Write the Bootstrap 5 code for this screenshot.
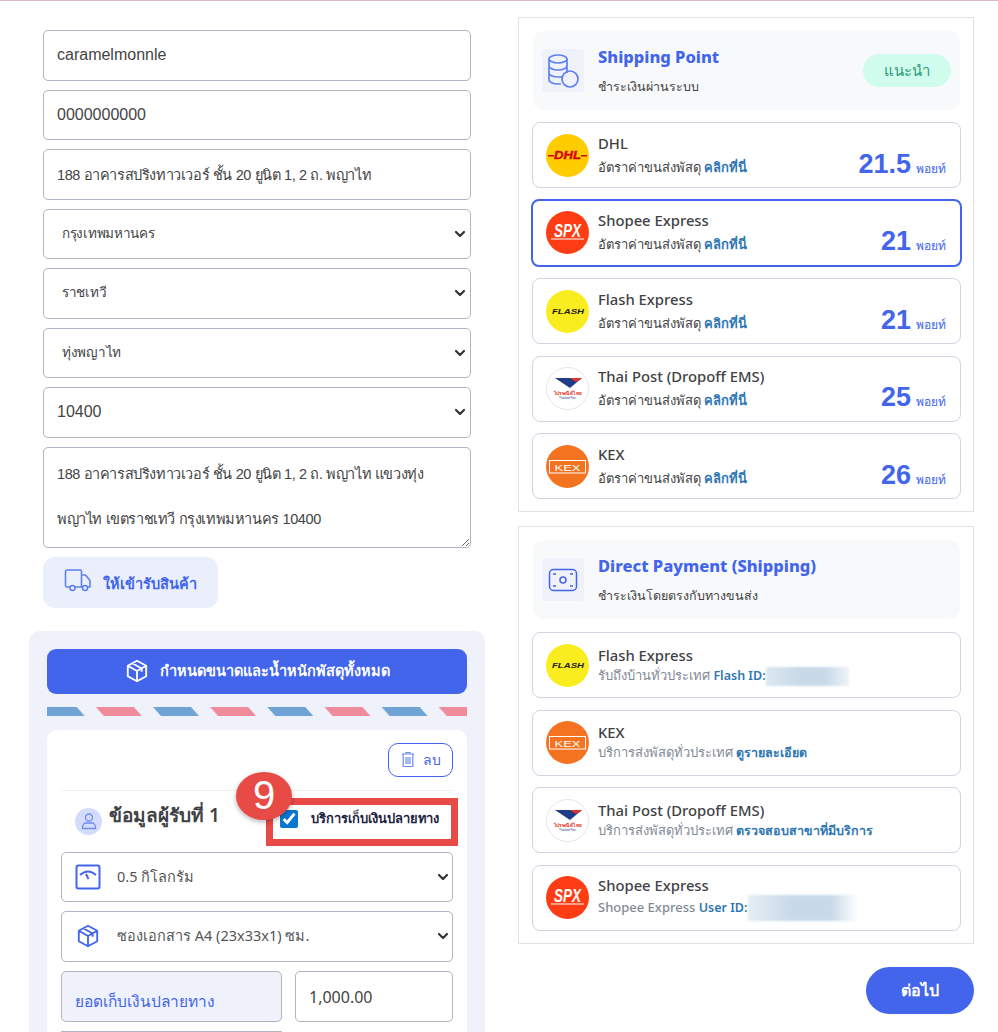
<!DOCTYPE html>
<html lang="th">
<head>
    <meta charset="UTF-8">
    <title>Shipping</title>
    <link href="https://cdn.jsdelivr.net/npm/bootstrap@5.3.0/dist/css/bootstrap.min.css" rel="stylesheet">
    <style>
        html, body { height: 1032px; overflow: hidden; }
        body { border-top: 1px solid #d9b8c2; font-family: "Noto Sans", "Noto Sans CJK SC", sans-serif; color: #3f4246; }
        .form-select { background-image: url("data:image/svg+xml,%3csvg xmlns='http://www.w3.org/2000/svg' viewBox='0 0 12 12'%3e%3cpath fill='none' stroke='%23333' stroke-width='2.2' stroke-linecap='round' stroke-linejoin='round' d='M2 4l4 4 4-4'/%3e%3c/svg%3e"); background-size: 12px 12px; }
        .page-left { width: 456px; margin-left: 29px; padding-top: 29px; }
        .page-right { width: 456px; margin-left: 33px; padding-top: 16px; }
        .addr-form { padding: 0 14px; display: flex; flex-direction: column; gap: 9px; }
        .addr-form .form-control, .addr-form .form-select {
            height: 50.5px; padding-left: 13px; border-color: #aeb6c2; border-radius: 5px; color: #444;
            font-family: "Liberation Sans", "Noto Sans", sans-serif; font-size: 16px;
        }
        .addr-form .form-select { background-position: right 4px center; }
        .addr-form .thai-line { font-size: 14.5px; letter-spacing: -.4px; }
        .addr-form .thai-option { padding-left: 18px; font-size: 13.5px; letter-spacing: -.3px; }
        .addr-form textarea.form-control { height: 101px; line-height: 45px; padding: 4px 13px; resize: both; white-space: pre; overflow: hidden; }
        .pickup-btn { width: 175px; height: 51px; padding-top: 9px; background: #ebeffb; color: #4265ec; border: 0; border-radius: 12px; font-weight: 800; font-size: 14.5px; gap: 11px; }
        .pickup-btn svg { margin-top: -7px; }
        .parcel-panel { margin-top: 23px; padding: 18px; height: 401px; overflow: hidden; background: #eff2fb; border-radius: 10px 10px 0 0; }
        .size-btn { width: 100%; height: 45px; background: #4265ec; color: #fff; border: 0; border-radius: 9px; font-size: 14.5px; font-weight: 600; gap: 10px; }
        .size-btn:hover { background: #4265ec; color: #fff; }
        .air-stripe { display: block; width: 100%; height: 9px; margin: 13px 0 14px; }
        .receiver-card { background: #fff; border-radius: 10px 10px 0 0; padding: 13px 14px 0; height: 302px; }
        .del-btn { width: 65px; height: 34px; padding: 0; border: 1px solid #4265ec; border-radius: 10px; color: #4265ec; background: #fff; font-size: 14px; }
        .receiver-head { height: 62px; margin-top: 13px; border-top: 1px solid #eef0f3; position: relative; }
        .person-badge { width: 27px; height: 27px; margin-left: 14px; background: #d3dcfb; border-radius: 50%; }
        .receiver-title { font-size: 19px; font-weight: 600; margin-left: 7px; line-height: 1; margin-bottom: 12px; }
        .cod-box { position: absolute; left: 205px; top: 7px; width: 192px; height: 48px; border: 7px solid #e84a46; display: flex; align-items: center; padding: 0 0 6px 7px; gap: 13px; font-size: 12.9px; font-weight: 800; color: #1d2340; background: #fff; }
        .cod-box input { width: 18px; height: 18px; margin: 0; accent-color: #0a78d1; }
        .step-badge { position: absolute; left: 175px; top: -19px; width: 56px; height: 48px; background: #e84a46; color: #fff; border-radius: 50%; font-size: 40px; line-height: 46px; text-align: center; font-family: "Liberation Sans", sans-serif; box-shadow: 0 2px 5px rgba(0,0,0,.3); z-index: 2; }
        .field-wrap { position: relative; margin-bottom: 9px; }
        .field-wrap .form-select { height: 50.5px; padding-left: 55px; border-color: #aeb6c2; border-radius: 5px; color: #555; font-size: 14.5px; background-position: right 3px center; }
        .field-icon { position: absolute; left: 14px; top: 12px; width: 26px; height: 26px; color: #4265ec; }
        .cod-label { width: 221px; height: 51px; padding: 17px 13px 0; background: #eff2fb; border: 1px solid #aeb6c2; border-radius: 5px; color: #4265ec; font-size: 15.5px; line-height: 24px; }
        .cod-amount { width: 158px; height: 51px; padding: 2px 13px 0; border-color: #aeb6c2; border-radius: 5px; color: #444; font-size: 16px; }
        .next-field { width: 221px; margin-top: 9px; border-top: 1px solid #aeb6c2; }
        .ship-box { border: 1px solid #dee2e6; padding: 13px 12px 12px 13px; display: flex; flex-direction: column; }
        .ship-box + .ship-box { margin-top: 14px; }
        .ship-head { height: 79px; margin: 0 1px 12px; padding: 0 9px; background: #f8f9fb; border-radius: 10px; display: flex; align-items: center; }
        .ship-box + .ship-box .ship-head { margin-bottom: 13px; }
        .head-icon { width: 42px; height: 43px; background: #eff2fb; border-radius: 4px; flex: none; display: flex; align-items: center; justify-content: center; }
        .head-text { flex-grow: 1; margin-left: 14px; }
        .head-title { color: #4265ec; font-size: 16.5px; font-weight: 800; line-height: 24px; margin-bottom: 8px; }
        .head-sub { font-size: 12.5px; line-height: 20px; color: #444; }
        .rec-pill { width: 88px; height: 33px; background: #cffcec; color: #2f9a78; border-radius: 17px; font-size: 15px; line-height: 33px; text-align: center; }
        .ship-item { height: 66px; margin-bottom: 11.5px; padding: 0 13px; border: 1px solid #cfd5e1; border-radius: 8px; display: flex; align-items: center; background: #fff; }
        .ship-item:last-child { margin-bottom: 0; }
        .ship-item.is-picked { height: 68px; margin: -1px -1px 11.5px; width: calc(100% + 2px); border: 2px solid #4265ec; }
        .ship-logo { width: 43px; height: 43px; flex: none; display: block; }
        .ship-text { margin-left: 9px; flex-grow: 1; min-width: 0; }
        .ship-name { font-size: 14.8px; font-weight: 500; line-height: 20px; color: #3f4246; }
        .ship-desc { margin-top: 3px; font-size: 13px; line-height: 22px; color: #444; font-weight: 500; white-space: nowrap; }
        .ship-desc.is-muted { margin-top: 0; color: #828a96; line-height: 20px; }
        .ship-desc a { color: #2f77b4; text-decoration: none; font-weight: 600; }
        .ship-desc.is-muted a { font-size: 12.5px; }
        .ship-price { color: #4265ec; align-self: flex-end; padding: 0 1px 3.5px 0; white-space: nowrap; line-height: 30px; }
        .ship-price b { font-family: "Liberation Sans", sans-serif; font-size: 27px; margin-right: 5px; }
        .ship-price span { font-size: 12px; }
        .blur-id { display: inline-block; vertical-align: middle; height: 19px; width: 83px; margin-left: -3px; background: linear-gradient(90deg, #dde8f1, #c8d9e8 40%, #c8d9e8 70%, #eef3f8); filter: blur(1px); }
        .blur-id.is-long { width: 110px; height: 26px; background: linear-gradient(90deg, #e6eef5, #c8d9e8 40%, #c8d9e8 75%, #fff); }
        .next-btn { width: 108px; height: 47px; margin-top: 23px; background: #4265ec; color: #fff; border: 0; border-radius: 24px; font-size: 16px; font-weight: 600; }
        .next-btn:hover { background: #4265ec; color: #fff; }
    </style>
</head>
<body>
<svg width="0" height="0" class="position-absolute">
    <symbol id="iconBox" viewBox="0 0 24 24">
        <path d="M12 2.500l8.500 4.700v9.600L12 21.500l-8.500-4.700V7.200zM3.500 7.200l8.500 4.800 8.500-4.800M12 12v9.500M7.700 4.900l8.600 4.800v3" fill="none" stroke="currentColor" stroke-width="1.700" stroke-linejoin="round"/>
    </symbol>
</svg>

<div class="d-flex">
    <!-- Address and parcel -->
    <div class="page-left">
        <form class="addr-form">
            <input type="text" class="form-control" value="caramelmonnle">
            <input type="text" class="form-control" value="0000000000">
            <input type="text" class="form-control thai-line" value="188 อาคารสปริงทาวเวอร์ ชั้น 20 ยูนิต 1, 2 ถ. พญาไท">
            <select class="form-select thai-option"><option>กรุงเทพมหานคร</option></select>
            <select class="form-select thai-option"><option>ราชเทวี</option></select>
            <select class="form-select thai-option"><option>ทุ่งพญาไท</option></select>
            <select class="form-select"><option>10400</option></select>
            <textarea class="form-control thai-line">188 อาคารสปริงทาวเวอร์ ชั้น 20 ยูนิต 1, 2 ถ. พญาไท แขวงทุ่ง
พญาไท เขตราชเทวี กรุงเทพมหานคร 10400</textarea>
            <button type="button" class="btn pickup-btn d-flex align-items-center justify-content-center">
                <svg width="28" height="24" viewBox="0 0 28 24" fill="none" stroke="#5f80ee" stroke-width="1.600" stroke-linejoin="round"><path d="M6 19H3a1.500 1.500 0 0 1-1.500-1.500v-14A1.500 1.500 0 0 1 3 2h13.500a1 1 0 0 1 1 1v16H11"/><path d="M17.500 7h4l4.500 5.500V19h-2.500M17.500 19H18"/><circle cx="8.500" cy="20" r="2.500"/><circle cx="21" cy="20" r="2.500"/></svg>
                ให้เข้ารับสินค้า
            </button>
        </form>

        <div class="parcel-panel">
            <button type="button" class="btn size-btn d-flex align-items-center justify-content-center">
                <svg width="26" height="26"><use href="#iconBox"/></svg>
                กำหนดขนาดและน้ำหนักพัสดุทั้งหมด
            </button>
            <svg class="air-stripe" height="9">
                <defs>
                    <pattern id="airPattern" width="114.300" height="9" patternUnits="userSpaceOnUse" x="-8.300">
                        <polygon points="0,0 38,0 46,9 8,9" fill="#6fa3d5"/>
                        <polygon points="57.150,0 95.150,0 103.150,9 65.150,9" fill="#f08b9c"/>
                    </pattern>
                </defs>
                <rect width="100%" height="9" fill="url(#airPattern)"/>
            </svg>

            <div class="receiver-card">
                <div class="d-flex justify-content-end">
                    <button type="button" class="btn del-btn d-flex align-items-center justify-content-center gap-2">
                        <svg width="14" height="17" viewBox="0 0 14 17" fill="none" stroke="#6f8cf0" stroke-width="1.200"><path d="M1 3h12M5 3V1.500h4V3M2.200 3v12.500h9.600V3M5 6v7M7 6v7M9 6v7"/></svg>
                        ลบ
                    </button>
                </div>
                <div class="receiver-head d-flex align-items-center">
                    <div class="person-badge d-flex align-items-center justify-content-center">
                        <svg width="16" height="18" viewBox="0 0 16 18" fill="none" stroke="#6f8cf0" stroke-width="1.300"><circle cx="8" cy="5.500" r="3.500"/><path d="M1.500 15.500c0-3 2-4.500 3.500-4.500h6c1.500 0 3.500 1.500 3.500 4.500v1h-13z"/></svg>
                    </div>
                    <div class="receiver-title">ข้อมูลผู้รับที่ 1</div>
                    <span class="step-badge">9</span>
                    <label class="cod-box"><input type="checkbox" checked>บริการเก็บเงินปลายทาง</label>
                </div>
                <div class="field-wrap">
                    <select class="form-select"><option>0.5 กิโลกรัม</option></select>
                    <svg class="field-icon" viewBox="0 0 26 26" fill="none" stroke="#4265ec" stroke-width="2"><rect x="1.500" y="1.500" width="23" height="23" rx="2"/><path d="M5 11q8-7 16 0M11 10l2.500 5"/></svg>
                </div>
                <div class="field-wrap">
                    <select class="form-select"><option>ซองเอกสาร A4 (23x33x1) ซม.</option></select>
                    <svg class="field-icon"><use href="#iconBox"/></svg>
                </div>
                <div class="d-flex justify-content-between">
                    <div class="cod-label">ยอดเก็บเงินปลายทาง</div>
                    <input type="text" class="form-control cod-amount" value="1,000.00">
                </div>
                <div class="next-field"></div>
            </div>
        </div>
    </div>

    <!-- Shipping options -->
    <div class="page-right">
        <div class="ship-box">
            <div class="ship-head">
                <div class="head-icon">
                    <svg width="34" height="36" viewBox="0 0 34 36" fill="none" stroke="#5f80ee" stroke-width="1.700"><ellipse cx="12" cy="6" rx="9" ry="4"/><path d="M3 6v21c0 2 4 4 9 4h3M3 13c0 2 4 4 9 4s9-2 9-4M3 20c0 2 4 4 9 4h4M21 6v14"/><circle cx="24" cy="26" r="8"/></svg>
                </div>
                <div class="head-text">
                    <div class="head-title">Shipping Point</div>
                    <div class="head-sub">ชำระเงินผ่านระบบ</div>
                </div>
                <div class="rec-pill">แนะนำ</div>
            </div>
            <div class="ship-item">
                <svg class="ship-logo" viewBox="0 0 43 43" data-logo="dhl"></svg>
                <div class="ship-text"><div class="ship-name">DHL</div><div class="ship-desc">อัตราค่าขนส่งพัสดุ <a href="#">คลิกที่นี่</a></div></div>
                <div class="ship-price"><b>21.5</b><span>พอยท์</span></div>
            </div>
            <div class="ship-item is-picked">
                <svg class="ship-logo" viewBox="0 0 43 43" data-logo="spx"></svg>
                <div class="ship-text"><div class="ship-name">Shopee Express</div><div class="ship-desc">อัตราค่าขนส่งพัสดุ <a href="#">คลิกที่นี่</a></div></div>
                <div class="ship-price"><b>21</b><span>พอยท์</span></div>
            </div>
            <div class="ship-item">
                <svg class="ship-logo" viewBox="0 0 43 43" data-logo="flash"></svg>
                <div class="ship-text"><div class="ship-name">Flash Express</div><div class="ship-desc">อัตราค่าขนส่งพัสดุ <a href="#">คลิกที่นี่</a></div></div>
                <div class="ship-price"><b>21</b><span>พอยท์</span></div>
            </div>
            <div class="ship-item">
                <svg class="ship-logo" viewBox="0 0 43 43" data-logo="post"></svg>
                <div class="ship-text"><div class="ship-name">Thai Post (Dropoff EMS)</div><div class="ship-desc">อัตราค่าขนส่งพัสดุ <a href="#">คลิกที่นี่</a></div></div>
                <div class="ship-price"><b>25</b><span>พอยท์</span></div>
            </div>
            <div class="ship-item">
                <svg class="ship-logo" viewBox="0 0 43 43" data-logo="kex"></svg>
                <div class="ship-text"><div class="ship-name">KEX</div><div class="ship-desc">อัตราค่าขนส่งพัสดุ <a href="#">คลิกที่นี่</a></div></div>
                <div class="ship-price"><b>26</b><span>พอยท์</span></div>
            </div>
        </div>

        <div class="ship-box">
            <div class="ship-head">
                <div class="head-icon">
                    <svg width="30" height="24" viewBox="0 0 30 24" fill="none" stroke="#4265ec" stroke-width="1.500"><rect x="1.500" y="1.500" width="27" height="21" rx="4"/><circle cx="15" cy="12" r="3"/><path d="M5 6h3M22 6h3M5 18h3M22 18h3"/></svg>
                </div>
                <div class="head-text">
                    <div class="head-title">Direct Payment (Shipping)</div>
                    <div class="head-sub">ชำระเงินโดยตรงกับทางขนส่ง</div>
                </div>
            </div>
            <div class="ship-item">
                <svg class="ship-logo" viewBox="0 0 43 43" data-logo="flash"></svg>
                <div class="ship-text"><div class="ship-name">Flash Express</div><div class="ship-desc is-muted">รับถึงบ้านทั่วประเทศ <a href="#">Flash ID:</a> <span class="blur-id"></span></div></div>
            </div>
            <div class="ship-item">
                <svg class="ship-logo" viewBox="0 0 43 43" data-logo="kex"></svg>
                <div class="ship-text"><div class="ship-name">KEX</div><div class="ship-desc is-muted">บริการส่งพัสดุทั่วประเทศ <a href="#">ดูรายละเอียด</a></div></div>
            </div>
            <div class="ship-item">
                <svg class="ship-logo" viewBox="0 0 43 43" data-logo="post"></svg>
                <div class="ship-text"><div class="ship-name">Thai Post (Dropoff EMS)</div><div class="ship-desc is-muted">บริการส่งพัสดุทั่วประเทศ <a href="#">ตรวจสอบสาขาที่มีบริการ</a></div></div>
            </div>
            <div class="ship-item">
                <svg class="ship-logo" viewBox="0 0 43 43" data-logo="spx"></svg>
                <div class="ship-text"><div class="ship-name">Shopee Express</div><div class="ship-desc is-muted">Shopee Express <a href="#">User ID:</a> <span class="blur-id is-long"></span></div></div>
            </div>
        </div>

        <div class="d-flex justify-content-end">
            <button type="button" class="btn next-btn">ต่อไป</button>
        </div>
    </div>
</div>

<script src="https://cdn.jsdelivr.net/npm/bootstrap@5.3.0/dist/js/bootstrap.bundle.min.js"></script>
<script>
    // Carrier logos, filled into each row
    const logos = {
        dhl: `<circle cx="21.500" cy="21.500" r="21.500" fill="#ffcc00"/>
              <path d="M2 21h6v1.500H2zM35 21h6v1.500h-6z" fill="#d40511"/>
              <text x="21.500" y="25" text-anchor="middle" textLength="27" lengthAdjust="spacingAndGlyphs" font-family="Liberation Sans" font-size="11" font-weight="700" font-style="italic" fill="#d40511" stroke="#d40511" stroke-width=".4">DHL</text>`,
        spx: `<circle cx="21.500" cy="21.500" r="21.500" fill="#ff3d14"/>
              <text x="21.500" y="26" text-anchor="middle" textLength="27" lengthAdjust="spacingAndGlyphs" font-family="Liberation Sans" font-size="18" font-weight="700" font-style="italic" fill="#fff">SPX</text>
              <rect x="5" y="27.500" width="33" height="1" fill="#fff"/>`,
        flash: `<circle cx="21.500" cy="21.500" r="21.500" fill="#f9ed1f"/>
              <text x="22" y="24" text-anchor="middle" textLength="32" lengthAdjust="spacingAndGlyphs" font-family="Liberation Sans" font-size="7" font-weight="700" font-style="italic" fill="#1a1a1a">FLASH</text>`,
        post: `<circle cx="21.500" cy="21.500" r="21" fill="#fff" stroke="#e3e5ea"/>
              <path d="M9 11h27l-12 10z" fill="#1f3c88"/>
              <path d="M24 11h12l-6 4z" fill="#e0352b"/>
              <text x="21.500" y="28" text-anchor="middle" textLength="28" lengthAdjust="spacingAndGlyphs" font-family="Noto Sans" font-size="5" font-weight="700" fill="#e0352b">ไปรษณีย์ไทย</text>
              <text x="21.500" y="31.500" text-anchor="middle" font-family="Liberation Sans" font-size="2.800" fill="#1f3c88">Thailand Post</text>`,
        kex: `<circle cx="21.500" cy="21.500" r="21.500" fill="#f47320"/>
              <rect x="3.500" y="15.500" width="36" height="12.500" fill="none" stroke="#fff" stroke-width="1"/>
              <text x="21.500" y="25.500" text-anchor="middle" textLength="26" lengthAdjust="spacingAndGlyphs" font-family="Liberation Sans" font-size="9.500" fill="#fff">KEX</text>`
    };
    document.querySelectorAll('[data-logo]').forEach(el => {
        el.innerHTML = logos[el.dataset.logo];
    });
</script>
</body>
</html>
